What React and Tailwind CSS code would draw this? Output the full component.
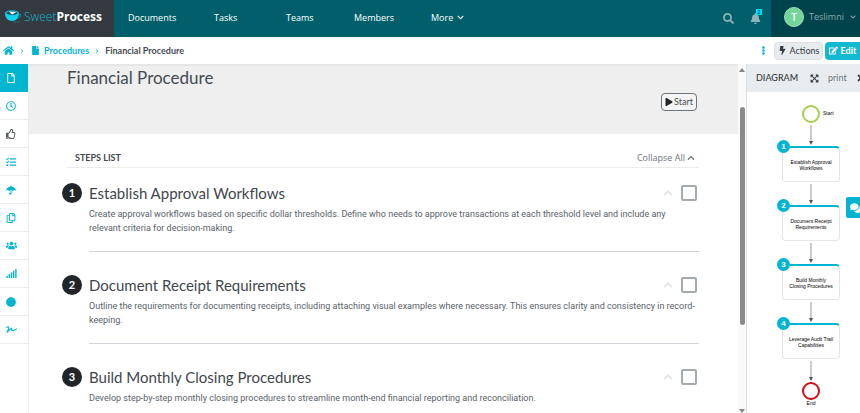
import React, { useState } from 'react';
import {
  FaBell, FaBolt, FaChevronDown, FaChevronUp, FaCircle, FaEdit, FaEllipsisV, FaFile, FaHome, FaPlay,
  FaRegClock, FaRegCopy, FaRegFile, FaRegThumbsUp, FaSearch, FaSignal, FaSignature, FaUmbrella,
  FaUsers, FaComments, FaTasks, FaExpandArrowsAlt, FaChevronRight, FaTimes,
} from 'react-icons/fa';

const RAIL = [
  { label: 'Procedure',  icon: FaRegFile },
  { label: 'History',    icon: FaRegClock },
  { label: 'Approvals',  icon: FaRegThumbsUp, gray: true },
  { label: 'Tasks',      icon: FaTasks },
  { label: 'Policies',   icon: FaUmbrella },
  { label: 'Duplicate',  icon: FaRegCopy },
  { label: 'Teams',      icon: FaUsers, wide: true },
  { label: 'Statistics', icon: FaSignal, wide: true },
  { label: 'Status',     icon: FaCircle },
  { label: 'Sign-off',   icon: FaSignature, wide: true },
];

const STEPS = [
  {
    title: 'Establish Approval Workflows',
    text: 'Create approval workflows based on specific dollar thresholds. Define who needs to approve transactions at each threshold level and include any relevant criteria for decision-making.',
  },
  {
    title: 'Document Receipt Requirements',
    text: 'Outline the requirements for documenting receipts, including attaching visual examples where necessary. This ensures clarity and consistency in record-keeping.',
  },
  {
    title: 'Build Monthly Closing Procedures',
    text: 'Develop step-by-step monthly closing procedures to streamline month-end financial reporting and reconciliation.',
  },
];

const NODES = [
  'Establish Approval Workflows',
  'Document Receipt Requirements',
  'Build Monthly Closing Procedures',
  'Leverage Audit Trail Capabilities',
];

function Logo() {
  return (
    <a href="#home" className="flex w-[114px] shrink-0 items-center gap-[2px] bg-[#343a40] pl-[5px] pb-1">
      <svg viewBox="0 0 34 26" className="h-[13px] w-[17px]" aria-hidden="true">
        <path d="M28 8c7 0 5 8-6 9" fill="none" stroke="#0a7f93" strokeWidth="2.2" />
        <path d="M0 6c0 9 6 16 14 16s14-7 14-16z" fill="#12d3f0" />
        <ellipse cx="14" cy="6" rx="14" ry="5.500" fill="#12c4df" />
        <ellipse cx="14" cy="6" rx="11" ry="3.500" fill="#14505f" />
        <path d="M8 3l6 6 9-5z" fill="#fff" />
        <path d="M17 24h13" stroke="#0a7f93" strokeWidth="1.500" />
      </svg>
      <span className="font-['Open_Sans',sans-serif] text-[12px] leading-4 font-light text-[#12b9d3]">
        Sweet<span className="font-bold text-white">Process</span>
      </span>
    </a>
  );
}

function TopBar() {
  return (
    <header className="flex h-[37px] shrink-0 bg-[#005f6b] text-[9px] text-white">
      <Logo />
      <nav className="flex flex-1 items-center pb-[2px] pl-[14px] font-medium">
        <a href="#documents" className="w-[86px]">Documents</a>
        <a href="#tasks" className="w-[72px]">Tasks</a>
        <a href="#teams" className="w-[68px]">Teams</a>
        <a href="#members" className="w-[77px]">Members</a>
        <button className="flex items-center gap-1">More <FaChevronDown className="size-[7px]" /></button>
      </nav>
      <div className="flex items-center gap-4 pr-[10px] text-[#8fb3b8]">
        <button aria-label="Search"><FaSearch className="size-[11px]" /></button>
        <button aria-label="Notifications" className="relative">
          <FaBell className="size-[11px]" />
          <span className="absolute -top-1 left-[6px] h-[6px] w-[6px] bg-[#00e0ff] text-center text-[5px] leading-[6px] font-bold text-[#005f6b]">2</span>
        </button>
      </div>
      <button className="flex w-[89px] shrink-0 items-center bg-[#00434b] pb-[3px] pl-[13px] text-[#8fa9ad]">
        <span className="flex size-5 items-center justify-center rounded-full border border-[#a5dfc0] bg-[#73d59a] text-[10px] font-semibold text-white">T</span>
        <span className="ml-[5px] flex-1 text-left text-[9px]">Teslimni</span>
        <FaChevronDown className="mr-1 size-[6px]" />
      </button>
    </header>
  );
}

function Breadcrumb() {
  return (
    <div className="flex h-[27px] shrink-0 items-center justify-between overflow-hidden bg-white">
      <nav className="flex items-center pl-[3px] font-['Lato',sans-serif] text-[9px] font-bold text-[#00b5d0]">
        <a href="#home" aria-label="Home"><FaHome className="size-[11px]" /></a>
        <FaChevronRight className="mx-[6px] size-1" />
        <a href="#procedures" className="ml-[1px] flex items-center gap-1">
          <FaFile className="size-[9px]" />Procedures
        </a>
        <FaChevronRight className="mx-[6px] size-1" />
        <span className="text-[#444b52]">Financial Procedure</span>
      </nav>
      <div className="flex items-center font-['Lato',sans-serif] text-[9px] text-[#343a40]">
        <button aria-label="More options" className="mr-[6px] text-[#00b5d0]"><FaEllipsisV className="size-[9px]" /></button>
        <button className="mr-[2px] flex h-[18px] w-[49px] items-center justify-center gap-[3px] rounded-sm border border-[#dde0e4] bg-[#e9ecef]">
          <FaBolt className="size-[9px]" />Actions
        </button>
        <button className="flex h-[18px] w-[35px] items-center justify-center gap-[3px] rounded-l-sm bg-[#13b9d2] font-bold text-white">
          <FaEdit className="size-[9px]" />Edit
        </button>
      </div>
    </div>
  );
}

function SideRail() {
  return (
    <aside className="w-[29px] shrink-0 border-r border-[#ececec] bg-white">
      {RAIL.map((r, i) => {
        const Icon = r.icon;
        return (
          <button key={r.label} aria-label={r.label}
            className={`flex h-7 w-7 items-center justify-center border-b pr-[6px] ${i === 0 ? 'border-[#00b5d0] bg-[#00b5d0] text-white' : r.gray ? 'border-[#ececec] text-[#555b61]' : 'border-[#ececec] text-[#00b5d0]'}`}>
            <Icon className={r.wide ? 'size-[11px]' : 'size-[10px]'} />
          </button>
        );
      })}
    </aside>
  );
}

function Step({ number, title, text }) {
  return (
    <li className="flex h-[92px] shrink-0">
      <span className="flex size-5 shrink-0 items-center justify-center rounded-full bg-[#212529] font-['Lato',sans-serif] text-[11px] font-bold text-white">{number}</span>
      <div className="ml-[7px] h-[69px] flex-1 border-b border-[#ced4da]">
        <div className="flex h-5 items-center justify-between">
          <h2 className="font-['Lato',sans-serif] text-[15px] leading-5 text-[#3f474e]">{title}</h2>
          <div className="flex items-center gap-2 pr-[2px]">
            <button aria-label={`Collapse ${title}`} className="text-[#dee2e6]"><FaChevronUp className="size-[10px]" /></button>
            <input type="checkbox" aria-label={`Complete ${title}`}
              className="size-4 appearance-none rounded-xs border-2 border-[#a3aab0] bg-white checked:bg-[#00b5d0]" />
          </div>
        </div>
        <p className="mt-1 font-['Roboto',sans-serif] text-[9px] leading-[14px] text-[#5a6268]">{text}</p>
      </div>
    </li>
  );
}

function Procedure() {
  const [open, setOpen] = useState(true);

  return (
    <main className="min-w-0 flex-1 overflow-hidden bg-white">
      <section className="h-[70px] border-t-2 border-[#e6e6e6] bg-[#efefef] pr-[41px] pl-[38px]">
        <h1 className="font-['Lato',sans-serif] text-[17px] leading-6 text-[#444b52]">Financial Procedure</h1>
        <div className="mt-[3px] flex justify-end">
          <button className="flex h-[18px] w-9 items-center justify-center gap-px rounded-sm border border-[#6c757d] bg-[#f4f4f4] font-['Lato',sans-serif] text-[9px] text-[#444b52]">
            <FaPlay className="size-2 text-[#212529]" />Start
          </button>
        </div>
      </section>

      <section className="pr-[39px] pl-[33px]">
        <div className="ml-[5px] flex h-[34px] items-end justify-between border-b border-[#ececec] pr-1 pb-[3px] pl-2 text-[9px] leading-3">
          <h2 className="font-['Lato',sans-serif] font-bold text-[#3f474e]">STEPS LIST</h2>
          <button onClick={() => setOpen(!open)} className="flex items-center gap-[2px] text-[#6c757d]">
            Collapse All <FaChevronUp className="size-2" />
          </button>
        </div>
        {open && (
          <ol className="mt-[15px] flex flex-col">
            {STEPS.map((s, i) => <Step key={s.title} number={i + 1} {...s} />)}
          </ol>
        )}
      </section>
    </main>
  );
}

function Scrollbar() {
  return (
    <div className="flex w-2 shrink-0 flex-col items-center bg-[#fafafa] pt-1 pb-0" aria-hidden="true">
      <span className="border-x-3 border-b-4 border-x-transparent border-b-[#858585]" />
      <span className="mt-[35px] w-[5px] flex-[218] rounded-full bg-[#8a8a8a]" />
      <span className="flex-[84]" />
      <span className="border-x-3 border-t-4 border-x-transparent border-t-[#858585]" />
    </div>
  );
}

function Arrow() {
  return (
    <svg viewBox="0 0 6 20" className="mt-[2px] mb-px h-5 w-[6px]" aria-hidden="true">
      <path d="M3 0v17" stroke="#a5abab" strokeWidth="1.200" />
      <path d="M1 16h4l-2 4z" fill="#4c5555" />
    </svg>
  );
}

function Diagram() {
  return (
    <aside className="w-[114px] shrink-0 overflow-hidden border-l border-[#dcdfe2] bg-white">
      <div className="flex h-7 w-[120px] items-center bg-[#e9ecef] pl-[9px] font-['Lato',sans-serif] text-[#343a40]">
        <h2 className="w-[54px] shrink-0 text-[9px] font-medium">DIAGRAM</h2>
        <button aria-label="Expand" className="shrink-0"><FaExpandArrowsAlt className="size-[9px]" /></button>
        <button className="ml-[9px] w-7 shrink-0 text-left text-[9px] text-[#6c757d]">print</button>
        <button aria-label="Close diagram" className="shrink-0"><FaTimes className="size-[10px]" /></button>
      </div>
      <div className="ml-[35px] flex w-[58px] flex-col items-center pt-[13px] font-['Liberation_Sans',sans-serif] text-[5px] leading-[6px] font-medium text-black">
        <div className="relative size-[18px] rounded-full border-2 border-[#a9cd4c]">
          <span className="absolute top-[3px] left-[19px]">Start</span>
        </div>
        <Arrow />
        {NODES.map((n, i) => (
          <React.Fragment key={n}>
            <div className="relative flex h-9 w-full items-center justify-center rounded-sm border border-t-2 border-[#e3e5e7] border-t-[#00b5d0] px-1 text-center">
              <span className="absolute -top-2 -left-[6px] flex size-[13px] items-center justify-center rounded-full bg-[#00b5d0] text-[8px] font-bold text-white">{i + 1}</span>
              {n}
            </div>
            <Arrow />
          </React.Fragment>
        ))}
        <div className="size-[18px] shrink-0 rounded-full border-2 border-[#cc1016]" />
        <span>End</span>
      </div>
    </aside>
  );
}

export default function App() {
  return (
    <div className="relative flex h-screen flex-col overflow-hidden bg-white font-['Open_Sans',sans-serif]">
      <TopBar />
      <Breadcrumb />
      <div className="flex min-h-0 flex-1">
        <SideRail />
        <Procedure />
        <Scrollbar />
        <Diagram />
      </div>
      <button aria-label="Open chat" className="absolute top-[197px] right-0 flex h-[21px] w-[14px] items-center overflow-hidden rounded-l-xs bg-[#00b5d0] pl-1 text-white">
        <FaComments className="size-3 shrink-0" />
      </button>
    </div>
  );
}
